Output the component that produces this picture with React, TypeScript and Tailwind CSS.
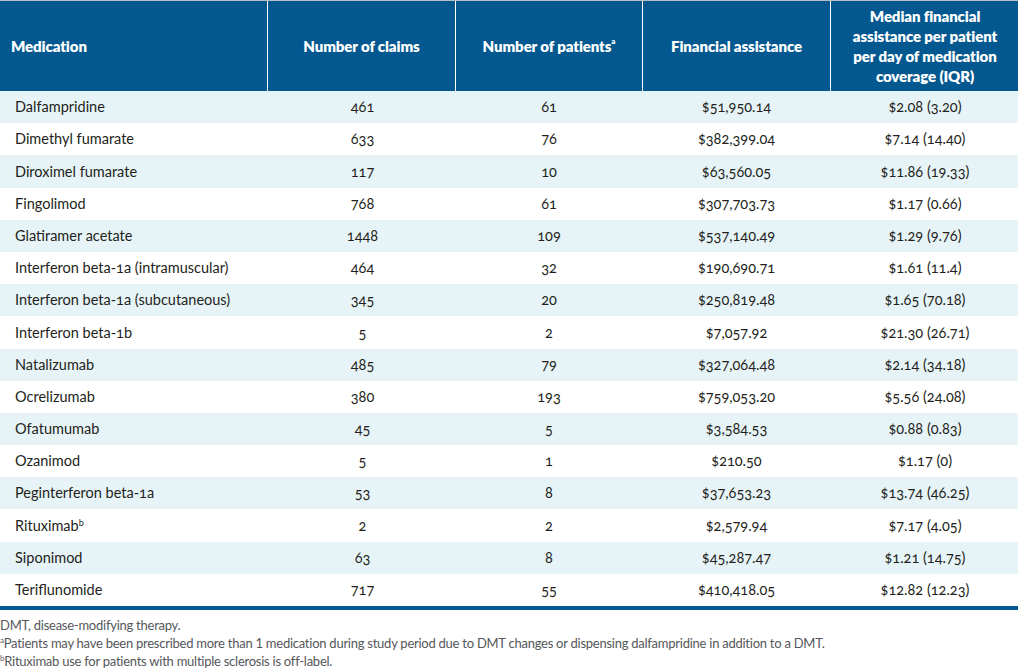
const rows: [string, string, string, string, string, string?][] = [
  ["Dalfampridine", "461", "61", "$51,950.14", "$2.08 (3.20)"],
  ["Dimethyl fumarate", "633", "76", "$382,399.04", "$7.14 (14.40)"],
  ["Diroximel fumarate", "117", "10", "$63,560.05", "$11.86 (19.33)"],
  ["Fingolimod", "768", "61", "$307,703.73", "$1.17 (0.66)"],
  ["Glatiramer acetate", "1448", "109", "$537,140.49", "$1.29 (9.76)"],
  ["Interferon beta-1a (intramuscular)", "464", "32", "$190,690.71", "$1.61 (11.4)"],
  ["Interferon beta-1a (subcutaneous)", "345", "20", "$250,819.48", "$1.65 (70.18)"],
  ["Interferon beta-1b", "5", "2", "$7,057.92", "$21.30 (26.71)"],
  ["Natalizumab", "485", "79", "$327,064.48", "$2.14 (34.18)"],
  ["Ocrelizumab", "380", "193", "$759,053.20", "$5.56 (24.08)"],
  ["Ofatumumab", "45", "5", "$3,584.53", "$0.88 (0.83)"],
  ["Ozanimod", "5", "1", "$210.50", "$1.17 (0)"],
  ["Peginterferon beta-1a", "53", "8", "$37,653.23", "$13.74 (46.25)"],
  ["Rituximab", "2", "2", "$2,579.94", "$7.17 (4.05)", "b"],
  ["Siponimod", "63", "8", "$45,287.47", "$1.21 (14.75)"],
  ["Teriflunomide", "717", "55", "$410,418.05", "$12.82 (12.23)"],
];

const cols = "grid grid-cols-[267px_1px_187px_1px_186px_1px_187px_1px_188px]";

export default function App() {
  return (
    <div className="w-[1018px] h-[670px] bg-white text-[#231f20] font-['Lato','Noto_Sans',sans-serif] overflow-hidden">
      {/* header */}
      <div className="border-t border-[#b9bec4]">
        <div className={`${cols} h-[90px] bg-[#02588f] text-white font-extrabold text-[15px] leading-[20px] tracking-[-0.1px]`}>
          <div className="flex items-center pl-[11px]">Medication</div>
          <div className="bg-white" />
          <div className="flex items-center justify-center text-center">Number of claims</div>
          <div className="bg-white" />
          <div className="flex items-center justify-center text-center">
            Number of patients<sup className="text-[8px] -top-[5px]">a</sup>
          </div>
          <div className="bg-white" />
          <div className="flex items-center justify-center text-center">Financial assistance</div>
          <div className="bg-white" />
          <div className="flex items-center justify-center text-center">
            Median financial
            <br />
            assistance per patient
            <br />
            per day of medication
            <br />
            coverage (IQR)
          </div>
        </div>
      </div>

      {/* body */}
      <div className="text-[14.5px] oldstyle-nums">
        {rows.map((r, i) => (
          <div
            key={r[0]}
            className={`${cols} h-[32.2px] items-center ${i % 2 === 0 ? "bg-[#e7f4f7]" : "bg-white"}`}
          >
            <div className="pl-[15px]">
              {r[0]}
              {r[5] && <sup className="text-[9px] -top-[5px]">{r[5]}</sup>}
            </div>
            <div />
            <div className="text-center pl-[2px]">{r[1]}</div>
            <div />
            <div className="text-center">{r[2]}</div>
            <div />
            <div className="text-center">{r[3]}</div>
            <div />
            <div className="text-center">{r[4]}</div>
          </div>
        ))}
      </div>
      <div className="h-[4px] bg-[#02588f]" />

      {/* footnotes */}
      <div className="pt-[6px] text-[13px] leading-[18px] tracking-[-0.25px] text-[#55575a]">
        <p>DMT, disease-modifying therapy.</p>
        <p>
          <sup className="text-[8px] -top-[5px]">a</sup>Patients may have been prescribed more than 1 medication during study period due to DMT changes or dispensing dalfampridine in addition to a DMT.
        </p>
        <p>
          <sup className="text-[8px] -top-[5px]">b</sup>Rituximab use for patients with multiple sclerosis is off-label.
        </p>
      </div>
    </div>
  );
}
